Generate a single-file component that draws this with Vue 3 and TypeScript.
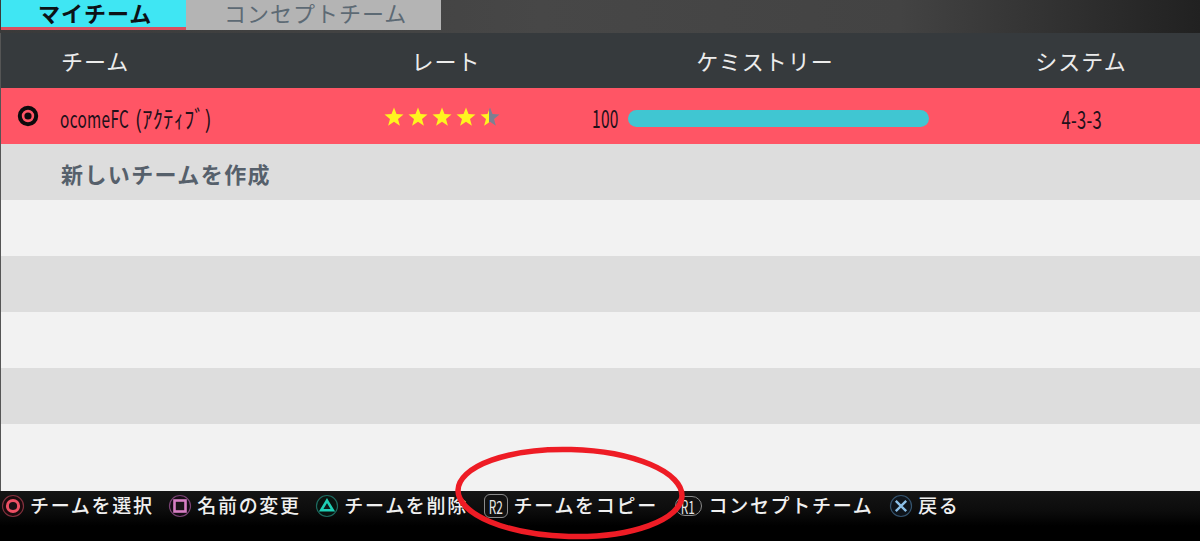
<script setup lang="ts">
type Hint = { icon: string; label: string }

const hints: Hint[] = [
  { icon: 'circle', label: 'チームを選択' },
  { icon: 'square', label: '名前の変更' },
  { icon: 'triangle', label: 'チームを削除' },
  { icon: 'r2', label: 'チームをコピー' },
  { icon: 'r1', label: 'コンセプトチーム' },
  { icon: 'cross', label: '戻る' },
]

const starPath = 'M10 0.5l2.5 6.6 7 .4-5.5 4.4 1.9 6.8L10 14.8l-5.9 3.9 1.9-6.8L.5 7.5l7-.4z'
const stars = [1, 2, 3, 4, 5]

const emptyRows = [0, 1, 2, 3]
</script>

<template>
  <div class="screen">
    <div class="tabs">
      <div class="tab tab-on">マイチーム</div>
      <div class="tab tab-off">コンセプトチーム</div>
    </div>

    <div class="table">
      <div class="row head">
        <span></span>
        <span class="team-head">チーム</span>
        <span class="mid">レート</span>
        <span class="mid">ケミストリー</span>
        <span class="mid">システム</span>
      </div>

      <div class="row active">
        <svg class="marker" width="22" height="22" viewBox="0 0 22 22">
          <circle cx="11" cy="11" r="8.2" fill="none" stroke="#0d0a0c" stroke-width="4" />
          <circle cx="11" cy="11" r="3.6" fill="#0d0a0c" />
        </svg>
        <span class="name"><span class="narrow latin">ocomeFC</span><span class="narrow kana">(ｱｸﾃｨﾌﾞ)</span></span>
        <span class="stars">
          <svg v-for="s in stars" :key="s" width="20" height="20" viewBox="0 0 20 20">
            <defs v-if="s === 5">
              <linearGradient id="half-star">
                <stop offset="46%" stop-color="#fff41f" />
                <stop offset="46%" stop-color="#7c8092" />
              </linearGradient>
            </defs>
            <path :d="starPath" :fill="s === 5 ? 'url(#half-star)' : '#fff41f'" />
          </svg>
        </span>
        <span class="chem">
          <span class="chem-num"><span class="narrow">100</span></span>
          <span class="bar"></span>
        </span>
        <span class="mid system"><span class="narrow">4-3-3</span></span>
      </div>

      <div class="row create">
        <span></span>
        <span class="create-label">新しいチームを作成</span>
      </div>

      <div v-for="r in emptyRows" :key="r" class="row" :class="r % 2 === 0 ? 'light' : 'grey'"></div>
      <div class="filler"></div>
    </div>

    <div class="footer">
      <div v-for="h in hints" :key="h.label" class="hint" :class="'hint-' + h.icon">
        <svg v-if="h.icon === 'circle'" class="btn" width="24" height="24" viewBox="0 0 24 24">
          <circle cx="12" cy="12" r="10.5" fill="#1a0a0d" stroke="#84303d" stroke-width="1.2" />
          <circle cx="12" cy="12" r="5.6" fill="#1b1115" stroke="#ee5064" stroke-width="3" />
        </svg>
        <svg v-else-if="h.icon === 'square'" class="btn" width="24" height="24" viewBox="0 0 24 24">
          <circle cx="12" cy="12" r="10.5" fill="#150c14" stroke="#7a4274" stroke-width="1.2" />
          <rect x="6.5" y="6.5" width="11" height="11" fill="#1b1318" stroke="#d77fc4" stroke-width="2.6" />
        </svg>
        <svg v-else-if="h.icon === 'triangle'" class="btn" width="24" height="24" viewBox="0 0 24 24">
          <circle cx="12" cy="12" r="10.5" fill="#08130f" stroke="#1d6a5f" stroke-width="1.2" />
          <path d="M12 6.6l5.8 9.6H6.2z" fill="#0c1a18" stroke="#1fd0b5" stroke-width="2.6" />
        </svg>
        <svg v-else-if="h.icon === 'cross'" class="btn" width="24" height="24" viewBox="0 0 24 24">
          <circle cx="12" cy="12" r="10.5" fill="#0e141b" stroke="#34536e" stroke-width="1.2" />
          <path d="M6.8 6.8l10.4 10.4M17.2 6.8L6.8 17.2" fill="none" stroke="#8cc0e8" stroke-width="2.4" />
        </svg>
        <span v-else class="shoulder" :class="h.icon"><span class="shoulder-text">{{ h.icon.toUpperCase() }}</span></span>
        <span class="hint-label">{{ h.label }}</span>
      </div>
    </div>

    <svg class="circled" width="1200" height="541" viewBox="0 0 1200 541">
      <ellipse cx="570" cy="493" rx="112" ry="43.5" transform="rotate(1.5 570 493)" fill="none" stroke="#ee1c25" stroke-width="5.5" />
    </svg>
  </div>
</template>

<style>
html,
body {
  margin: 0;
  background: #000;
}
</style>

<style scoped>
.screen {
  position: relative;
  width: 1200px;
  height: 541px;
  overflow: hidden;
  display: flex;
  flex-direction: column;
  font-family: 'Noto Sans CJK JP', 'Noto Sans', sans-serif;
  background: #000;
}

.tabs {
  display: flex;
  height: 33px;
  flex: none;
  box-sizing: border-box;
  padding: 0 0 3px 1px;
  background: linear-gradient(90deg, #3a3a3a 0, #474747 45%, #434343 75%, #212121 100%);
}

.tab {
  box-sizing: border-box;
  height: 30px;
  font-family: 'Liberation Sans', 'Noto Sans CJK JP', sans-serif;
  font-size: 22px;
  line-height: 30px;
  letter-spacing: 1px;
  white-space: nowrap;
  overflow: hidden;
}

.tab-on {
  width: 185px;
  padding-left: 37px;
  background: #3fe6f3;
  border-bottom: 3px solid #d9505f;
  color: #0c1216;
  font-weight: 700;
}

.tab-off {
  width: 255px;
  padding-left: 38px;
  background: #b4b4b4;
  color: #5d6a74;
}

.table {
  flex: 1;
  display: flex;
  flex-direction: column;
  border-left: 1px solid #555;
  background: #f2f2f2;
}

.row {
  flex: none;
  height: 56px;
  display: grid;
  grid-template-columns: 59px 286px 200px 438px 194px 22px;
  align-items: center;
}

.head {
  height: 55px;
  background: #363a3d;
  color: #ececec;
  font-size: 22px;
  letter-spacing: 1px;
}

.head span {
  margin-top: -2px;
}

.team-head {
  padding-left: 1px;
}

.mid {
  text-align: center;
}

.active {
  background: #ff5565;
  color: #22101a;
  font-size: 22px;
}

.marker {
  margin-left: 16px;
}

.narrow {
  display: inline-block;
  transform: scaleX(0.72);
  white-space: nowrap;
  letter-spacing: 0.5px;
}

.name {
  padding-top: 3px;
  white-space: nowrap;
}

.latin {
  font-size: 24px;
  transform: scaleX(0.64);
  transform-origin: 0 50%;
  margin-right: -33px;
}

.kana {
  font-size: 24px;
  transform: scaleX(0.84);
  transform-origin: 0 50%;
}

.stars {
  display: flex;
  justify-content: center;
  gap: 4px;
  padding-right: 9px;
  margin-top: 2px;
}

.chem {
  display: flex;
  align-items: center;
  padding-left: 46px;
  padding-top: 4px;
}

.chem-num {
  width: 36px;
  flex: none;
  margin-top: -1px;
}

.chem-num .narrow {
  font-size: 25px;
  line-height: 28px;
  transform: scaleX(0.62);
  transform-origin: 0 50%;
}

.bar {
  width: 301px;
  height: 17px;
  border-radius: 9px;
  background: #40c6d2;
}

.system {
  padding-top: 3px;
  padding-left: 1px;
}

.system .narrow {
  font-size: 25px;
  transform: scaleX(0.66);
}

.create {
  background: #dddddd;
}

.create-label {
  padding-left: 1px;
  padding-top: 1px;
  font-size: 22px;
  font-weight: 700;
  letter-spacing: 1.4px;
  color: #56606b;
  white-space: nowrap;
}

.light {
  background: #f2f2f2;
}

.grey {
  background: #dddddd;
}

.filler {
  flex: 1;
}

.footer {
  flex: none;
  height: 50px;
  box-sizing: border-box;
  padding: 3px 0 0 1px;
  display: flex;
  gap: 14.6px;
  align-items: flex-start;
  background: linear-gradient(#151515 0, #0c0c0c 40%, #000 70%);
  color: #f0f0f0;
}

.hint {
  display: flex;
  align-items: center;
  gap: 5px;
  height: 24px;
}

.hint-label {
  font-size: 19px;
  line-height: 22px;
  margin-top: -2px;
  font-weight: 500;
  letter-spacing: 1.7px;
  white-space: nowrap;
}

.hint-r2 {
  margin-left: 1px;
  gap: 6px;
}

.hint-r1 {
  margin-left: 2px;
  gap: 7px;
}

.hint-cross {
  margin-left: 1px;
}

.shoulder {
  box-sizing: border-box;
  width: 24px;
  height: 24px;
  border: 1.5px solid #8b8b8b;
  border-radius: 6px;
  display: flex;
  align-items: center;
  justify-content: center;
  background: #111;
}

.shoulder.r1 {
  border-radius: 10px;
  width: 27px;
  height: 20px;
}

.shoulder-text {
  font-size: 18px;
  transform: scaleX(0.66);
  color: #e8e8e8;
}

.circled {
  position: absolute;
  left: 0;
  top: 0;
  pointer-events: none;
}
</style>
